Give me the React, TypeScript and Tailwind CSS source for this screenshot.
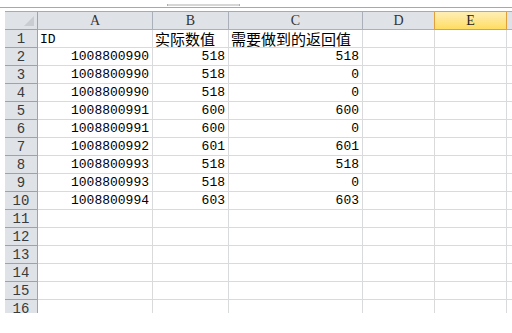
import React from "react";

const cols = ["A", "B", "C", "D", "E"];
const widths = [115, 76, 134, 72, 72];

type Row = [string, string, string];
const data: (Row | null)[] = [
  ["ID", "实际数值", "需要做到的返回值"],
  ["1008800990", "518", "518"],
  ["1008800990", "518", "0"],
  ["1008800990", "518", "0"],
  ["1008800991", "600", "600"],
  ["1008800991", "600", "0"],
  ["1008800992", "601", "601"],
  ["1008800993", "518", "518"],
  ["1008800993", "518", "0"],
  ["1008800994", "603", "603"],
  null, null, null, null, null, null,
];

const mono = { fontFamily: "'Liberation Mono', 'Noto Sans CJK SC', monospace" };

export default function App() {
  return (
    <div className="w-[512px] h-[333px] bg-white overflow-hidden relative" style={mono}>
      {/* top strip */}
      <div className="h-[7px] relative">
        <div className="absolute left-[167px] top-[4px] w-[73px] h-[2px] bg-[#d6d6d6] border-x border-[#b0b0b0]" />
      </div>
      <div className="h-[1px] bg-[#a8a8a8]" />
      <div className="h-[3px] bg-white" />
      <div className="pl-[5px] h-[302px] overflow-hidden">
        {/* header row */}
        <div className="flex h-[19px] border-t border-[#a7abb0]">
          <div className="w-[33px] shrink-0 bg-[#dfe3e8] border-r border-b border-[#9ba3ad] relative">
            <div
              className="absolute right-[3px] bottom-[3px] w-[10px] h-[10px] bg-[#c9ccd0]"
              style={{ clipPath: "polygon(100% 0, 100% 100%, 0 100%)" }}
            />
          </div>
          {cols.map((c, i) =>
            c === "E" ? (
              <div
                key={c}
                className="shrink-0 flex items-center justify-center text-[14px] text-[#222] bg-gradient-to-b from-[#fdeeb5] to-[#ffdd5e] border-r border-b border-l border-[#e2a03b] -ml-[1px]"
                style={{ width: widths[i] + 1, fontFamily: "'Liberation Serif', serif" }}
              >
                {c}
              </div>
            ) : (
              <div
                key={c}
                className="shrink-0 flex items-center justify-center text-[14px] text-[#333] bg-[#dfe3e8] border-r border-b border-[#a9b0b9]"
                style={{ width: widths[i], fontFamily: "'Liberation Serif', serif" }}
              >
                {c}
              </div>
            )
          )}
          <div className="flex-1 bg-[#dfe3e8] border-b border-[#a9b0b9]" />
        </div>
        {data.map((row, r) => (
          <div key={r} className="flex h-[18px]">
            <div className="w-[33px] shrink-0 bg-[#dfe3e8] border-r border-b border-[#9ba3ad] flex items-center justify-center text-[14px] text-[#3a3a3a] leading-none pt-[1px]">
              {r + 1}
            </div>
            {widths.map((w, i) => {
              const v = row && i < 3 ? row[i] : "";
              const isCjk = /[\u4e00-\u9fff]/.test(v);
              const left = r === 0;
              return (
                <div
                  key={i}
                  className={`shrink-0 border-r border-b border-[#d9dadb] flex items-end leading-none text-black overflow-visible whitespace-nowrap ${
                    left ? "justify-start pl-[2px] pb-[1px]" : "justify-end pr-[3px] pb-[2px]"
                  }`}
                  style={{ width: w }}
                >
                  {isCjk ? (
                    <span className="text-[15px]" style={{ fontFamily: "'Noto Sans CJK SC', sans-serif", lineHeight: "15px" }}>
                      {v}
                    </span>
                  ) : (
                    <span className="text-[13px]">{v}</span>
                  )}
                </div>
              );
            })}
            <div className="flex-1 border-b border-[#d9dadb]" />
          </div>
        ))}
      </div>
    </div>
  );
}
